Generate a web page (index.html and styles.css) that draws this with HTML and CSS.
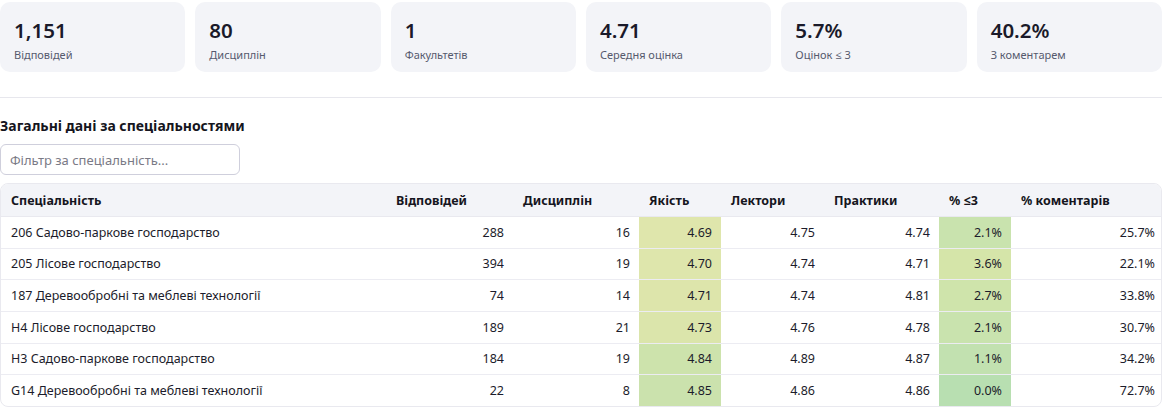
FILE: index.html
```html
<!DOCTYPE html>
<html lang="uk">
<head>
<meta charset="utf-8">
<title>Загальні дані</title>
<link rel="stylesheet" href="styles.css">
</head>
<body>
<div class="stats">
  <div class="card"><div class="num">1,151</div><div class="lbl">Відповідей</div></div>
  <div class="card"><div class="num">80</div><div class="lbl">Дисциплін</div></div>
  <div class="card"><div class="num">1</div><div class="lbl">Факультетів</div></div>
  <div class="card"><div class="num">4.71</div><div class="lbl">Середня оцінка</div></div>
  <div class="card"><div class="num">5.7%</div><div class="lbl">Оцінок ≤ 3</div></div>
  <div class="card"><div class="num">40.2%</div><div class="lbl">З коментарем</div></div>
</div>
<hr class="sep">
<h3 class="title">Загальні дані за спеціальностями</h3>
<input class="filter" type="text" placeholder="Фільтр за спеціальність...">
<div class="table-wrap">
<table class="grid">
  <colgroup>
    <col class="c-name"><col class="c-resp"><col class="c-disc"><col class="c-q"><col class="c-lect"><col class="c-prac"><col class="c-low"><col class="c-com">
  </colgroup>
  <thead>
    <tr><th>Спеціальність</th><th>Відповідей</th><th>Дисциплін</th><th>Якість</th><th>Лектори</th><th>Практики</th><th>% ≤3</th><th>% коментарів</th></tr>
  </thead>
  <tbody>
    <tr><td>206 Садово-паркове господарство</td><td class="n">288</td><td class="n">16</td><td class="n" style="background:#dfe6ac">4.69</td><td class="n">4.75</td><td class="n">4.74</td><td class="n" style="background:#c9e3ae">2.1%</td><td class="n last">25.7%</td></tr>
    <tr><td>205 Лісове господарство</td><td class="n">394</td><td class="n">19</td><td class="n" style="background:#dee6ac">4.70</td><td class="n">4.74</td><td class="n">4.71</td><td class="n" style="background:#d5e5a9">3.6%</td><td class="n last">22.1%</td></tr>
    <tr><td>187 Деревообробні та меблеві технології</td><td class="n">74</td><td class="n">14</td><td class="n" style="background:#dde5ab">4.71</td><td class="n">4.74</td><td class="n">4.81</td><td class="n" style="background:#cfe4ab">2.7%</td><td class="n last">33.8%</td></tr>
    <tr><td>H4 Лісове господарство</td><td class="n">189</td><td class="n">21</td><td class="n" style="background:#dbe5ab">4.73</td><td class="n">4.76</td><td class="n">4.78</td><td class="n" style="background:#c9e3ae">2.1%</td><td class="n last">30.7%</td></tr>
    <tr><td>H3 Садово-паркове господарство</td><td class="n">184</td><td class="n">19</td><td class="n" style="background:#cde3ac">4.84</td><td class="n">4.89</td><td class="n">4.87</td><td class="n" style="background:#c2e1b0">1.1%</td><td class="n last">34.2%</td></tr>
    <tr><td>G14 Деревообробні та меблеві технології</td><td class="n">22</td><td class="n">8</td><td class="n" style="background:#cbe2ad">4.85</td><td class="n">4.86</td><td class="n">4.86</td><td class="n" style="background:#b8dfb1">0.0%</td><td class="n last">72.7%</td></tr>
  </tbody>
</table>
</div>
</body>
</html>
```
FILE: styles.css
```css
html, body {
  margin: 0;
  padding: 0;
  background: #ffffff;
}
body {
  font-family: "Noto Sans", "Open Sans", sans-serif;
  color: #1c1c2b;
  width: 1162px;
}
.stats {
  display: grid;
  grid-template-columns: repeat(6, 1fr);
  gap: 10px;
  padding-top: 2px;
}
.card {
  background: #f3f4f8;
  border-radius: 10px;
  height: 70px;
  box-sizing: border-box;
  padding: 15px 14px 0;
}
.num {
  font-size: 20.5px;
  font-weight: 600;
  line-height: 26px;
  color: #1a1a2a;
}
.lbl {
  font-size: 11px;
  line-height: 16px;
  margin-top: 4px;
  color: #565a6e;
}
.sep {
  border: 0;
  border-top: 1px solid #e7e7ed;
  margin: 25px 0 0;
  height: 0;
}
.title {
  font-size: 14px;
  font-weight: 700;
  margin: 18px 0 0;
  line-height: 20px;
  color: #151520;
}
.filter {
  display: block;
  box-sizing: border-box;
  width: 240px;
  height: 31px;
  margin: 8px 0 0;
  border: 1px solid #cfcfdc;
  border-radius: 6px;
  padding: 0 9px;
  font-family: inherit;
  font-size: 13px;
  color: #1c1c2b;
  background: #fff;
}
.filter::placeholder {
  color: #7a7a86;
}
.table-wrap {
  margin-top: 8px;
  border: 1px solid #e9e9ef;
  border-radius: 8px;
  overflow: hidden;
}
.grid {
  width: 100%;
  border-collapse: collapse;
  table-layout: fixed;
  font-size: 12.5px;
}
.c-name { width: 385px; }
.c-resp { width: 127px; }
.c-disc { width: 126px; }
.c-q { width: 82px; }
.c-lect { width: 103px; }
.c-prac { width: 115px; }
.c-low { width: 72px; }
.c-com { width: 150px; }
.grid th {
  background: #f3f4f8;
  text-align: left;
  font-weight: 700;
  padding: 0 10px;
  height: 32px;
  border-bottom: 1px solid #e9e9ef;
  color: #151520;
}
.grid td {
  padding: 0 10px 0 10px;
  height: 30.67px;
  border-bottom: 1px solid #ececf2;
  color: #1c1c2b;
  white-space: nowrap;
}
.grid tbody tr:last-child td {
  border-bottom: 0;
}
.grid td.n {
  text-align: right;
  padding-right: 9px;
}
.grid td.last {
  padding-right: 6px;
}
```
